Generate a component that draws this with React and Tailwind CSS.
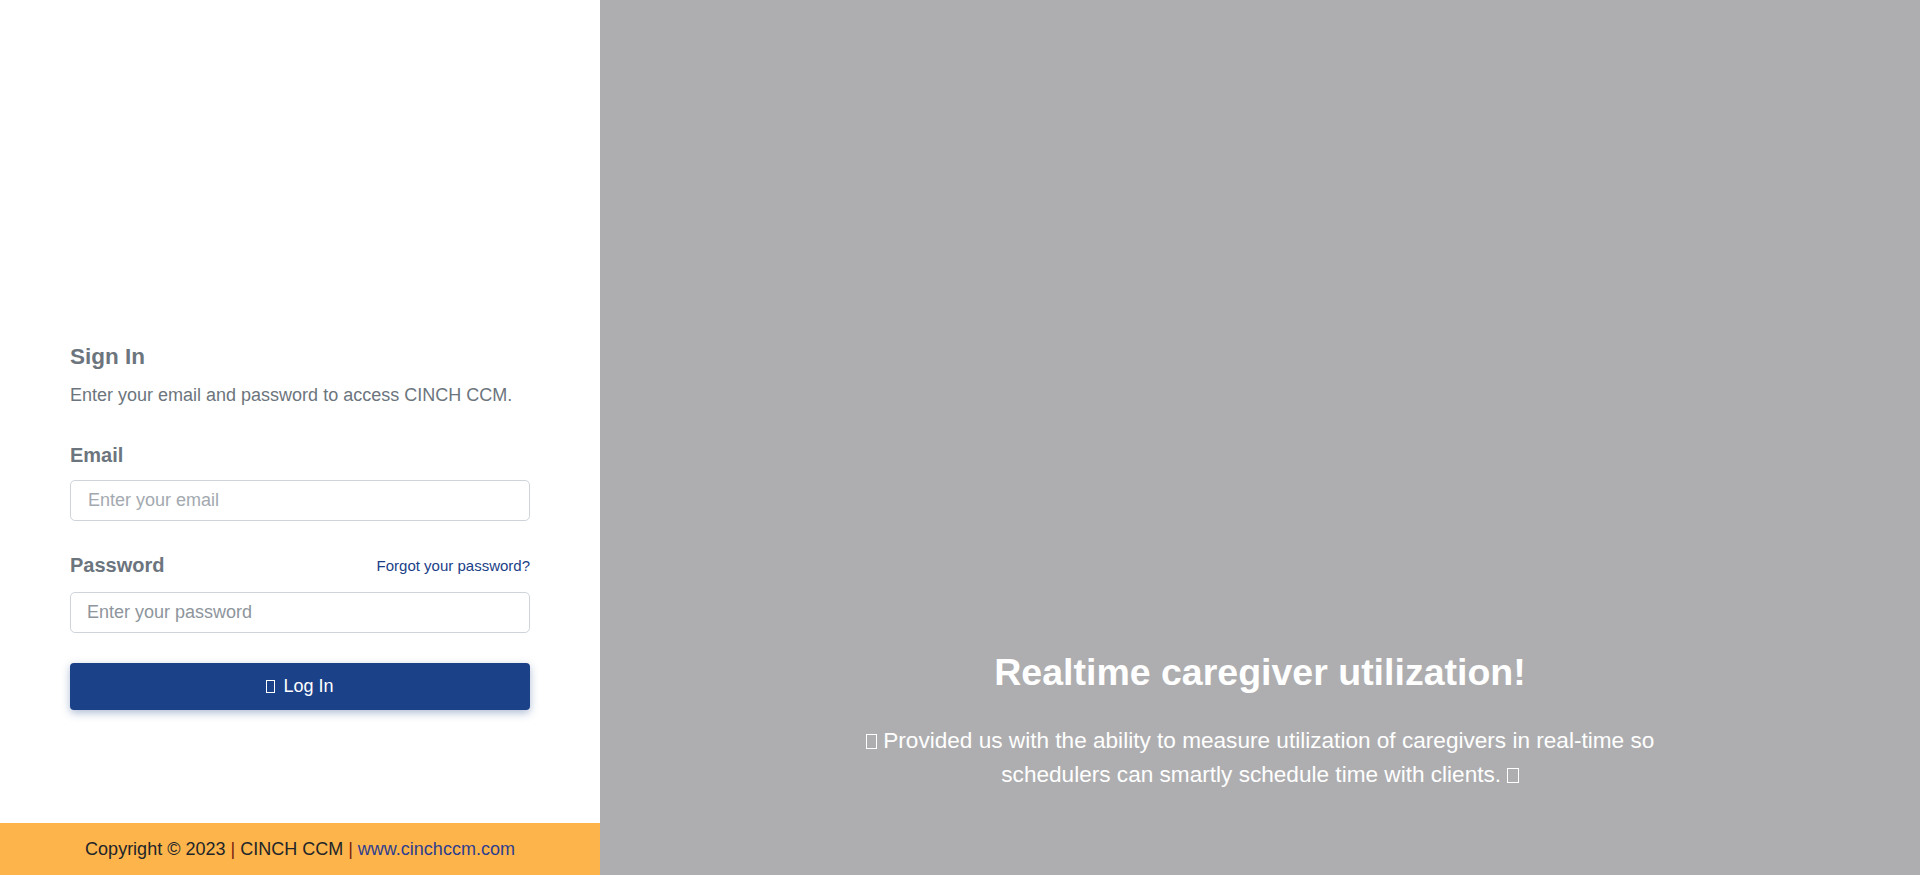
import React from 'react'

const Tofu = () => (
    <span className="inline-block w-[0.5em] h-[0.67em] border border-current align-[-0.05em]" />
)

const App = () => {
    return (
        <main className="flex w-full h-[875px] font-['Liberation_Sans',Arial,sans-serif]">
            {/* Left side (form) */}
            <aside className="w-[600px] flex flex-col bg-white">
                <div className="flex-1 px-[70px] pt-[344px]">
                    <h4 className="text-[22.5px] leading-[26px] font-bold text-[#6c757d]">Sign In</h4>
                    <p className="mt-[12px] text-[18px] leading-[27px] text-[#6c757d]">
                        Enter your email and password to access CINCH CCM.
                    </p>

                    <label className="block mt-[33px] text-[20px] leading-[27px] font-bold text-[#6c757d]">Email</label>
                    <input
                        type="text"
                        className="mt-[11px] w-full h-[41px] border border-[#ced4da] rounded-[5px] px-[17px] text-[18px] text-[#495057] placeholder:text-[#a3a9b0] outline-none"
                        placeholder="Enter your email"
                    />

                    <div className="mt-[31px] flex items-center justify-between">
                        <label className="text-[20px] leading-[27px] font-bold text-[#6c757d]">Password</label>
                        <a href="#" className="text-[15px] leading-[22px] text-[#1b3f87]">Forgot your password?</a>
                    </div>
                    <input
                        type="password"
                        className="mt-[13px] w-full h-[41px] border border-[#ced4da] rounded-[5px] px-[16px] text-[18px] text-[#495057] placeholder:text-[#8e959c] outline-none"
                        placeholder="Enter your password"
                    />

                    <button className="mt-[30px] w-full h-[47px] bg-[#1b4188] text-white text-[18px] rounded-[4px] shadow-[0_3px_8px_rgba(27,65,136,0.35)] flex items-center justify-center gap-[8px]">
                        <Tofu /> Log In
                    </button>
                </div>

                <footer className="h-[52px] bg-[#fdb44b] flex items-center justify-center text-[18px] text-[#212529]">
                    <span>
                        Copyright © 2023 <span className="text-[#7a1d12]">|</span> CINCH CCM <span className="text-[#7a1d12]">|</span>{' '}
                        <a href="#" className="text-[#2d3e8e]">www.cinchccm.com</a>
                    </span>
                </footer>
            </aside>

            {/* Right side (slide) */}
            <section className="flex-1 bg-[#aeaeb0] flex flex-col justify-end items-center pb-[83px] text-white text-center">
                <h2 className="text-[37.5px] leading-[44px] font-bold">Realtime caregiver utilization!</h2>
                <p className="mt-[30px] max-w-[840px] text-[22.6px] leading-[34px]">
                    <Tofu /> Provided us with the ability to measure utilization of caregivers in real-time so schedulers can smartly schedule time with clients. <Tofu />
                </p>
            </section>
        </main>
    )
}

export default App
